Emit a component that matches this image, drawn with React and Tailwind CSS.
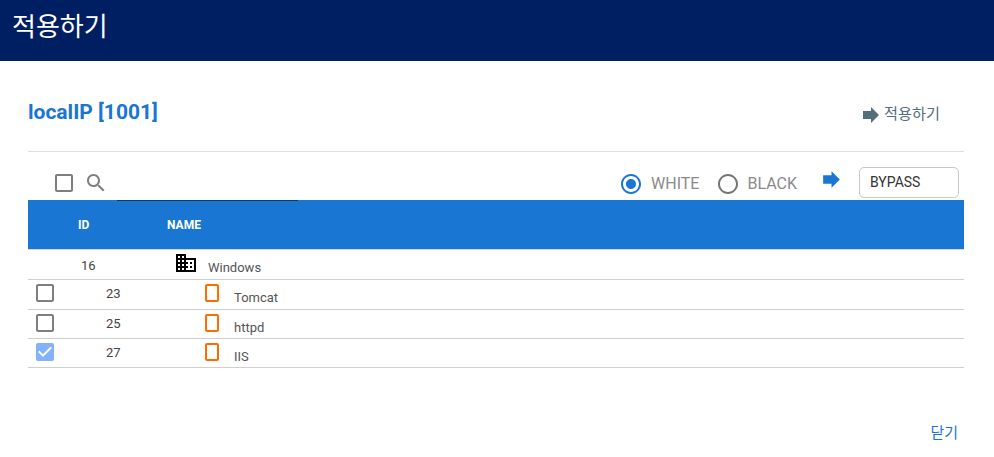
const F = { fontFamily: 'Roboto, "Noto Sans CJK KR", sans-serif' };

function Box({ className }) {
  return (
    <svg viewBox="0 0 24 24" className={className} fill="currentColor">
      <path d="M19 5v14H5V5h14m0-2H5c-1.1 0-2 .9-2 2v14c0 1.1.9 2 2 2h14c1.1 0 2-.9 2-2V5c0-1.1-.9-2-2-2z" />
    </svg>
  );
}
function Checked() {
  return (
    <svg viewBox="0 0 24 24" className="w-6 h-6 text-[#82b1ff]" fill="currentColor">
      <path d="M19 3H5c-1.11 0-2 .9-2 2v14c0 1.1.89 2 2 2h14c1.11 0 2-.9 2-2V5c0-1.1-.89-2-2-2z" />
      <path fill="#fff" d="M10 17l-5-5 1.41-1.41L10 14.17l7.59-7.59L19 8z" />
    </svg>
  );
}
function Arrow({ className }) {
  return (
    <svg viewBox="0 0 24 24" className={className} fill="currentColor">
      <path d="M12 8V4l8 8-8 8v-4H4V8z" />
    </svg>
  );
}
function Portrait() {
  return (
    <svg viewBox="0 0 24 24" className="w-6 h-6 text-[#ff6d00]" fill="currentColor">
      <path d="M17 3H7c-1.1 0-2 .9-2 2v14c0 1.1.9 2 2 2h10c1.1 0 2-.9 2-2V5c0-1.1-.9-2-2-2zm0 16H7V5h10v14z" />
    </svg>
  );
}
function Domain() {
  return (
    <svg viewBox="0 0 24 24" className="w-6 h-6 text-black" fill="currentColor">
      <path d="M12 7V3H2v18h20V7H12zM6 19H4v-2h2v2zm0-4H4v-2h2v2zm0-4H4V9h2v2zm0-4H4V5h2v2zm4 12H8v-2h2v2zm0-4H8v-2h2v2zm0-4H8V9h2v2zm0-4H8V5h2v2zm10 12h-8v-2h2v-2h-2v-2h2v-2h-2V9h8v10zm-2-8h-2v2h2v-2zm0 4h-2v2h2v-2z" />
    </svg>
  );
}

function Row({ id, name, checked, tall }) {
  return (
    <div className={tall ? "flex h-[30px] border-b border-[#cfcfcf] text-[13px] text-[#444]" : "flex h-[29px] border-b border-[#cfcfcf] text-[13px] text-[#444]"}>
      <div className="w-[34px] flex justify-center shrink-0 pt-px">
        {checked ? <Checked /> : <Box className="w-6 h-6 text-[#7f7f7f]" />}
      </div>
      <div className="w-[44px] shrink-0 pl-[44px] pt-[4px]">{id}</div>
      <div className="w-[94px] shrink-0" />
      <div className="shrink-0 mt-px"><Portrait /></div>
      <div className="pl-[10px] pt-[8px] text-[#555]">{name}</div>
    </div>
  );
}

export default function App() {
  return (
    <div className="w-[994px] h-[457px] bg-white overflow-hidden flex flex-col" style={F}>
      <div className="h-[61px] bg-[#001e62] text-white text-[26px] pl-3 pt-[9px] leading-[36px]">적용하기</div>

      <div className="flex flex-col pl-7 pr-[30px] flex-1">
        <div className="h-[91px] border-b border-[#e0e0e0] flex justify-between shrink-0">
          <div className="text-[#1976d2] text-[21px] font-bold leading-[28px] pt-[37px]">localIP [1001]</div>
          <div className="flex items-start gap-[1px] pt-[41px] pr-6 text-[#546e7a] text-[15.2px]">
            <Arrow className="w-6 h-6 mt-px" />
            <span className="leading-[24px]">적용하기</span>
          </div>
        </div>

        <div className="h-[48px] flex items-center justify-between shrink-0">
          <div className="flex items-center h-full">
            <Box className="w-6 h-6 ml-6 mt-[14px] text-[#7f7f7f]" />
            <svg viewBox="0 0 24 24" className="w-6 h-6 ml-2 mt-[13px] text-[#7f7f7f]" fill="currentColor">
              <path d="M15.5 14h-.79l-.28-.27C15.41 12.59 16 11.11 16 9.5 16 5.91 13.09 3 9.5 3S3 5.91 3 9.5 5.91 16 9.5 16c1.61 0 3.09-.59 4.23-1.57l.27.28v.79l5 4.99L20.49 19l-4.99-5zm-6 0C7.01 14 5 11.99 5 9.5S7.01 5 9.5 5 14 7.01 14 9.5 11.99 14 9.5 14z" />
            </svg>
            <div className="relative z-10 w-[181px] h-[49px] self-start border-b border-[#0d3c61] ml-[9px]" />
          </div>
          <div className="flex items-center h-full pr-[5px] pt-[16px]">
            <svg viewBox="0 0 24 24" className="w-6 h-6 text-[#1976d2]" fill="currentColor">
              <path d="M12 7c-2.76 0-5 2.24-5 5s2.24 5 5 5 5-2.24 5-5-2.24-5-5-5zm0-5C6.48 2 2 6.48 2 12s4.48 10 10 10 10-4.48 10-10S17.52 2 12 2zm0 18c-4.42 0-8-3.58-8-8s3.58-8 8-8 8 3.58 8 8-3.58 8-8 8z" />
            </svg>
            <span className="ml-2 text-[16px] text-[#8a8a8a] leading-[24px]">WHITE</span>
            <svg viewBox="0 0 24 24" className="w-6 h-6 ml-[17px] text-[#757575]" fill="currentColor">
              <path d="M12 2C6.48 2 2 6.48 2 12s4.48 10 10 10 10-4.48 10-10S17.52 2 12 2zm0 18c-4.42 0-8-3.58-8-8s3.58-8 8-8 8 3.58 8 8-3.58 8-8 8z" />
            </svg>
            <span className="ml-[7px] text-[16px] text-[#8a8a8a] leading-[24px]">BLACK</span>
            <Arrow className="w-[25px] h-[25px] ml-[22px] -mt-[9px] text-[#1976d2]" />
            <div className="ml-[15px] w-[100px] h-[31px] border border-[#c8c8c8] rounded-[5px] text-[14px] text-[#333] pl-[10px] leading-[28px] -mt-[3px] bg-white">BYPASS</div>
          </div>
        </div>

        <div className="h-[50px] bg-[#1976d2] text-white text-[12px] font-bold flex shrink-0 border-b border-[#cfd8dc]">
          <div className="pl-[50px] w-[139px] pt-[16px]">ID</div>
          <div className="pt-[16px]">NAME</div>
        </div>

        <div className="flex h-[30px] border-b border-[#cfcfcf] text-[13px] text-[#444]">
          <div className="w-[53px] shrink-0" />
          <div className="w-[93px] shrink-0 pt-[6px]">16</div>
          <div className="shrink-0 mt-px"><Domain /></div>
          <div className="pl-[10px] pt-[8px] text-[#555]">Windows</div>
        </div>
        <Row id="23" name="Tomcat" tall />
        <Row id="25" name="httpd" />
        <Row id="27" name="IIS" checked />

        <div className="flex justify-end pr-[6px] pt-[55px] text-[15px] text-[#1976d2] leading-[20px]">닫기</div>
      </div>
    </div>
  );
}
